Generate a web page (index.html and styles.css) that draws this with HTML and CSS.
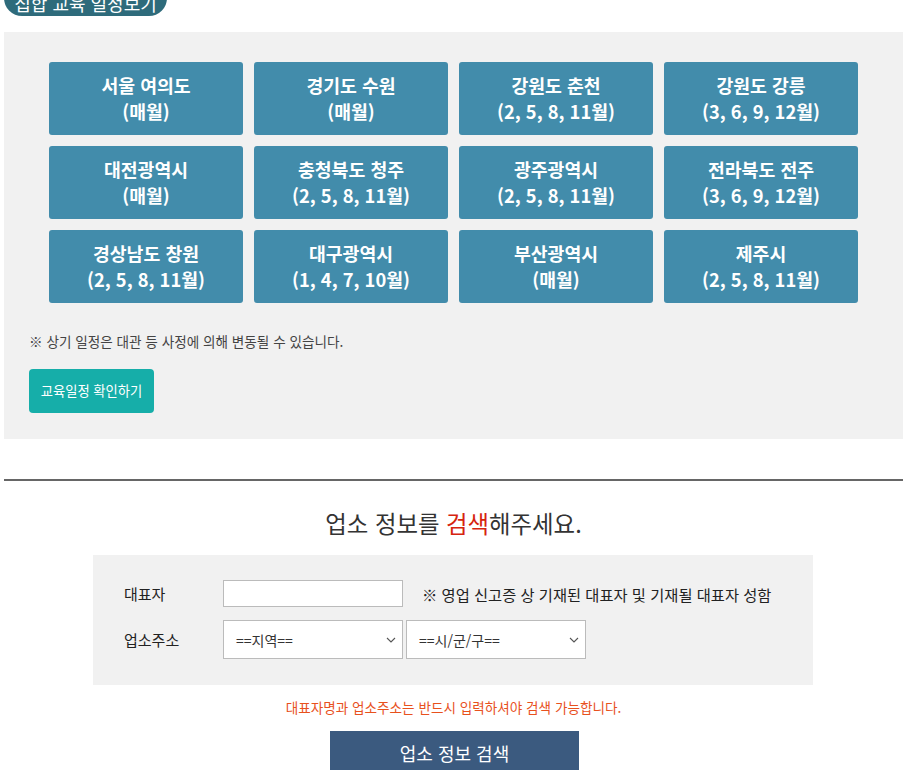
FILE: index.html
```html
<!DOCTYPE html>
<html lang="ko">
<head>
<meta charset="utf-8">
<title>집합 교육 일정보기</title>
<link rel="stylesheet" href="styles.css">
</head>
<body>
<div class="wrap">
  <div class="tab">집합 교육 일정보기</div>
  <section class="schedule">
    <div class="grid">
      <div class="card">서울 여의도<br>(매월)</div>
      <div class="card">경기도 수원<br>(매월)</div>
      <div class="card">강원도 춘천<br>(2, 5, 8, 11월)</div>
      <div class="card">강원도 강릉<br>(3, 6, 9, 12월)</div>
      <div class="card">대전광역시<br>(매월)</div>
      <div class="card">충청북도 청주<br>(2, 5, 8, 11월)</div>
      <div class="card">광주광역시<br>(2, 5, 8, 11월)</div>
      <div class="card">전라북도 전주<br>(3, 6, 9, 12월)</div>
      <div class="card">경상남도 창원<br>(2, 5, 8, 11월)</div>
      <div class="card">대구광역시<br>(1, 4, 7, 10월)</div>
      <div class="card">부산광역시<br>(매월)</div>
      <div class="card">제주시<br>(2, 5, 8, 11월)</div>
    </div>
    <p class="note">※ 상기 일정은 대관 등 사정에 의해 변동될 수 있습니다.</p>
    <a class="check-btn">교육일정 확인하기</a>
  </section>
  <hr class="divider">
  <h2 class="title">업소 정보를 <span class="red">검색</span>해주세요.</h2>
  <form class="search">
    <div class="row">
      <label class="lbl">대표자</label>
      <input class="txt" type="text">
      <span class="hint">※ 영업 신고증 상 기재된 대표자 및 기재될 대표자 성함</span>
    </div>
    <div class="row">
      <label class="lbl">업소주소</label>
      <div class="sel"><span>==지역==</span><svg width="10" height="6" viewBox="0 0 10 6"><path d="M1 1 L5 5 L9 1" fill="none" stroke="#555" stroke-width="1.1"/></svg></div>
      <div class="sel"><span>==시/군/구==</span><svg width="10" height="6" viewBox="0 0 10 6"><path d="M1 1 L5 5 L9 1" fill="none" stroke="#555" stroke-width="1.1"/></svg></div>
    </div>
  </form>
  <p class="warn">대표자명과 업소주소는 반드시 입력하셔야 검색 가능합니다.</p>
  <div class="btn-row"><a class="search-btn">업소 정보 검색</a></div>
</div>
</body>
</html>
```
FILE: styles.css
```css
html, body {
  margin: 0;
  padding: 0;
  background: #fff;
  font-family: "Noto Sans CJK KR", "Noto Sans", sans-serif;
  color: #333;
}
.wrap {
  margin: 0 1px 0 4px;
  overflow: hidden;
}
.tab {
  width: 163px;
  height: 40px;
  margin-top: -24px;
  padding-top: 14px;
  background: #2e6b7b;
  color: #fff;
  border-radius: 18px;
  font-size: 18px;
  line-height: 26px;
  text-align: center;
  box-sizing: border-box;
}
.schedule {
  margin-top: 16px;
  background: #f1f1f1;
  padding: 30px 45px 26px 25px;
  height: 407px;
  box-sizing: border-box;
}
.grid {
  display: grid;
  grid-template-columns: repeat(4, 194px);
  grid-auto-rows: 73px;
  gap: 11px;
  margin-left: 20px;
}
.card {
  background: #428cab;
  border-radius: 3px;
  color: #fff;
  font-weight: 700;
  font-size: 18.3px;
  line-height: 26px;
  text-align: center;
  display: flex;
  align-items: center;
  justify-content: center;
  padding-bottom: 2px;
  box-sizing: border-box;
}
.note {
  margin: 28px 0 0;
  font-size: 13.6px;
  line-height: 20px;
  color: #444;
}
.check-btn {
  display: inline-block;
  margin-top: 18px;
  width: 125px;
  height: 44px;
  line-height: 44px;
  background: #16aea9;
  color: #fff;
  border-radius: 4px;
  font-size: 13.3px;
  text-align: center;
}
.divider {
  margin: 40px 0 0;
  border: 0;
  height: 2px;
  background: #666;
}
.title {
  margin: 26px 0 0;
  font-size: 23.4px;
  font-weight: 400;
  line-height: 32px;
  text-align: center;
  color: #333;
}
.red { color: #d6240f; }
.search {
  margin: 16px 0 0 89px;
  width: 720px;
  height: 130px;
  background: #f1f1f1;
  box-sizing: border-box;
  padding: 25px 0 0 31px;
  display: flex;
  flex-direction: column;
  gap: 13px;
}
.row {
  display: flex;
  align-items: center;
}
.lbl {
  width: 99px;
  font-size: 15px;
  color: #222;
}
.txt {
  width: 180px;
  height: 27px;
  box-sizing: border-box;
  border: 1px solid #bbb;
  background: #fff;
  margin: 0;
}
.hint {
  margin-left: 19px;
  font-size: 15.3px;
  color: #222;
}
.sel {
  width: 180px;
  height: 39px;
  box-sizing: border-box;
  border: 1px solid #bbb;
  background: #fff;
  display: flex;
  align-items: center;
  justify-content: space-between;
  padding: 0 6px 0 12px;
  font-size: 14px;
  color: #333;
  margin-right: 3px;
}
.warn {
  margin: 12px 0 0;
  text-align: center;
  font-size: 13.6px;
  color: #e8511d;
  line-height: 20px;
}
.btn-row {
  display: flex;
  justify-content: center;
  margin-top: 14px;
}
.search-btn {
  display: block;
  width: 249px;
  height: 46px;
  line-height: 44px;
  background: #3b5a7f;
  color: #fff;
  font-size: 18px;
  text-align: center;
  margin-left: 2px;
}
```
